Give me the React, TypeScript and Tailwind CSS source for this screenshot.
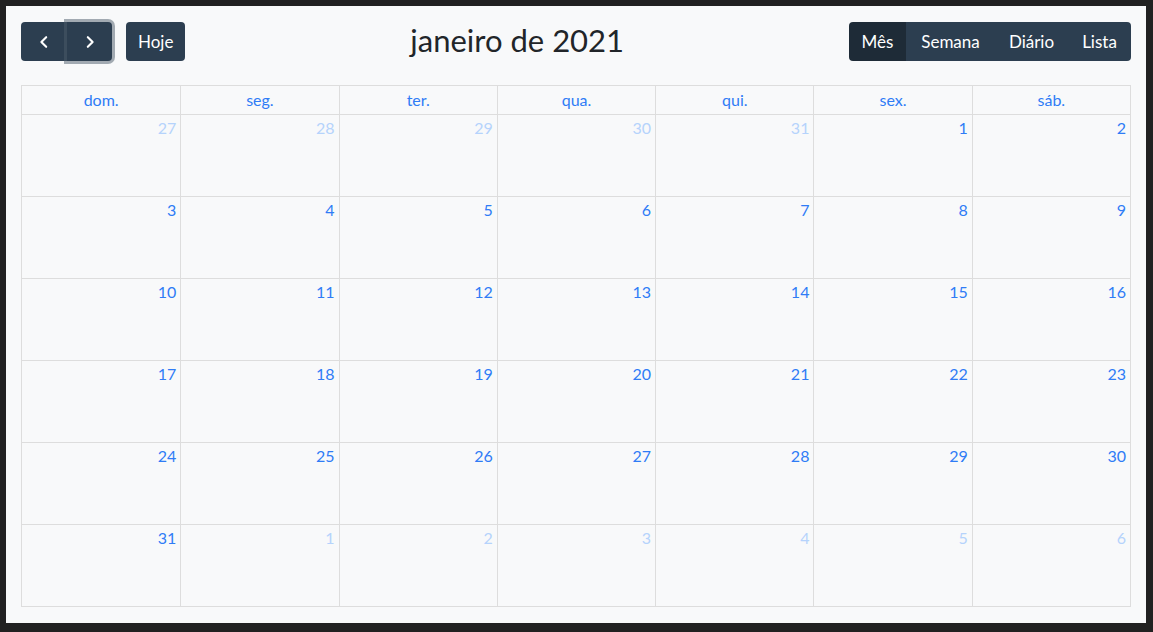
import React from "react";

const days = ["dom.", "seg.", "ter.", "qua.", "qui.", "sex.", "sáb."];

function buildWeeks() {
  const cells: { n: number; other: boolean }[] = [];
  for (let d = 27; d <= 31; d++) cells.push({ n: d, other: true });
  for (let d = 1; d <= 31; d++) cells.push({ n: d, other: false });
  for (let d = 1; d <= 6; d++) cells.push({ n: d, other: true });
  const weeks: { n: number; other: boolean }[][] = [];
  for (let i = 0; i < 6; i++) weeks.push(cells.slice(i * 7, i * 7 + 7));
  return weeks;
}

export default function App() {
  const weeks = buildWeeks();
  return (
    <div className="w-[1153px] h-[632px] bg-[#212121] pl-[6px] pt-[6px] pr-[7px] pb-[9px]" style={{ fontFamily: "Lato, 'Noto Sans', sans-serif" }}>
      <div className="w-full h-full bg-[#f8f9fa] px-[15px] pt-[16px]">
        <div className="flex items-center justify-between h-[39px]">
          <div className="flex items-center gap-[14px]">
            <div className="flex">
              <button className="w-[46px] h-[39px] bg-[#2c3e50] text-white rounded-l-[4px] flex items-center justify-center">
                <svg width="14" height="14" viewBox="0 0 16 16" fill="none" stroke="white" strokeWidth="2.4" strokeLinecap="round" strokeLinejoin="round"><path d="M10.5 2.5 5 8l5.5 5.5" /></svg>
              </button>
              <button className="w-[45px] h-[39px] bg-[#2c3e50] text-white rounded-r-[4px] flex items-center justify-center shadow-[0_0_0_3px_rgba(76,91,106,0.5)] relative">
                <svg width="14" height="14" viewBox="0 0 16 16" fill="none" stroke="white" strokeWidth="2.4" strokeLinecap="round" strokeLinejoin="round"><path d="M5.5 2.5 11 8l-5.5 5.5" /></svg>
              </button>
            </div>
            <button className="h-[39px] px-[12px] bg-[#2c3e50] text-white rounded-[4px] text-[17px]">Hoje</button>
          </div>
          <h2 className="text-[31px] text-[#212529] leading-none -mt-[2px]">janeiro de 2021</h2>
          <div className="flex w-[282px] h-[39px] rounded-[4px] overflow-hidden text-white text-[17px]">
            <button className="w-[57px] bg-[#1e2b37]">Mês</button>
            <button className="w-[89px] bg-[#2c3e50]">Semana</button>
            <button className="w-[73px] bg-[#2c3e50]">Diário</button>
            <button className="w-[63px] bg-[#2c3e50]">Lista</button>
          </div>
        </div>
        <div className="mt-[24px] w-[1110px] border border-[#dddddd]">
          <div className="grid grid-cols-7 h-[28px]">
            {days.map((d, i) => (
              <div key={d} className={`flex items-center justify-center text-[16px] text-[#2f7cf6] ${i > 0 ? "border-l border-[#dddddd]" : ""}`}>{d}</div>
            ))}
          </div>
          {weeks.map((w, wi) => (
            <div key={wi} className="grid grid-cols-7 h-[82px] border-t border-[#dddddd]">
              {w.map((c, ci) => (
                <div key={ci} className={`flex justify-end pr-[4px] pt-[3px] text-[16px] leading-[20px] ${ci > 0 ? "border-l border-[#dddddd]" : ""} ${c.other ? "text-[#b5d3fc]" : "text-[#2f7cf6]"}`}>
                  {c.n}
                </div>
              ))}
            </div>
          ))}
        </div>
      </div>
    </div>
  );
}
